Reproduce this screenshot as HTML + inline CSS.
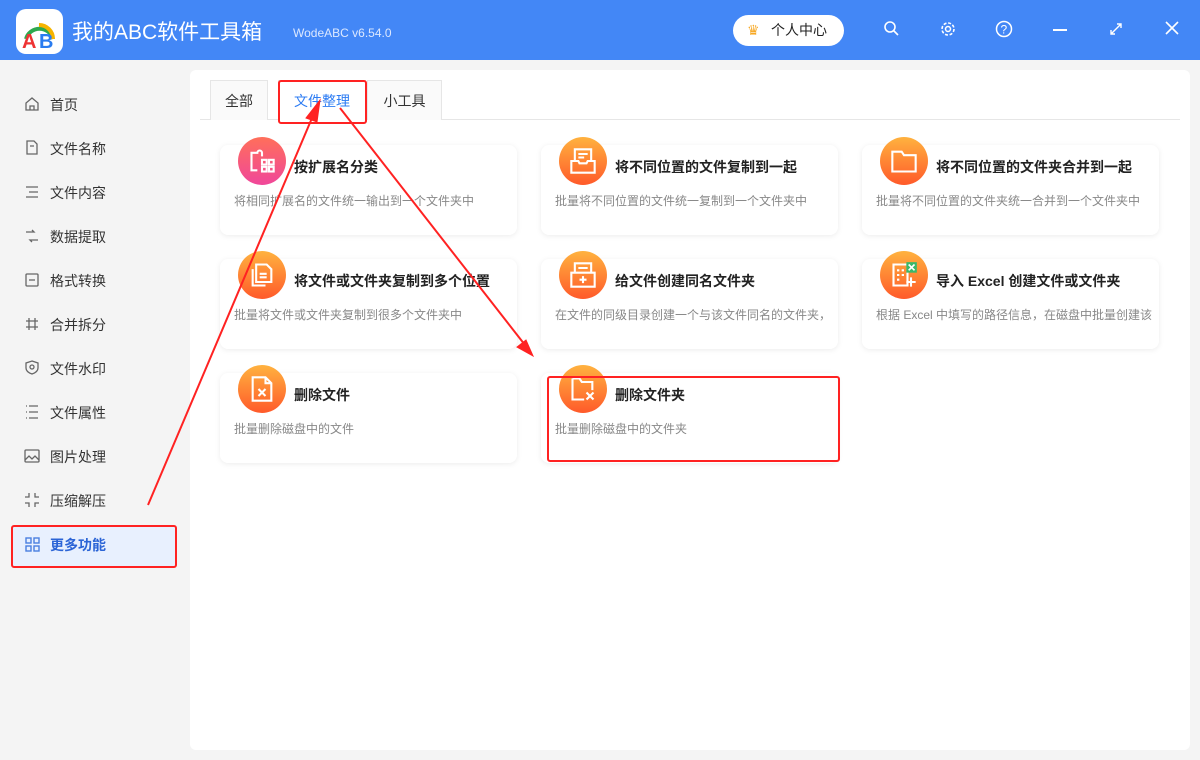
<!DOCTYPE html>
<html><head><meta charset="utf-8"><style>
*{margin:0;padding:0;box-sizing:border-box}
body{width:1200px;height:760px;overflow:hidden;background:#f4f4f4;font-family:"Liberation Sans","Noto Sans CJK SC",sans-serif;position:relative}
.top{position:absolute;left:0;top:0;width:1200px;height:60px;background:#4387f6}
.logo{position:absolute;left:16px;top:9px;width:47px;height:45px;background:#fff;border-radius:10px}
.ttl{position:absolute;left:72px;top:16px;color:#fff;font-size:21px}
.ver{position:absolute;left:293px;top:26px;color:#dce8ff;font-size:12px}
.pc{position:absolute;left:733px;top:15px;width:111px;height:31px;background:#fff;border-radius:16px;font-size:14px;color:#222;line-height:31px;padding-left:38px}
.ic{position:absolute;top:20px}
.side div{position:absolute;left:50px;font-size:14px;color:#333}
.panel{position:absolute;left:190px;top:70px;width:1000px;height:680px;background:#fff;border-radius:6px}
.tab{position:absolute;top:80px;height:40px;border:1px solid #e6e6e6;border-bottom:none;background:#fafafa;font-size:14px;line-height:40px;text-align:center;color:#333}
.card{position:absolute;width:297px;height:90px;background:#fff;border-radius:8px;box-shadow:0 1px 6px rgba(0,0,0,.08)}
.card .c{position:absolute;left:18px;top:-8px;width:48px;height:48px;border-radius:50%;background:linear-gradient(#ffb23f,#ff5a2a)}
.card .c svg{position:absolute;left:10px;top:10px;width:28px;height:28px}
.card b{position:absolute;left:74px;top:12px;font-size:14px;color:#222}
.card p{position:absolute;left:14px;top:47px;font-size:12px;color:#888;white-space:nowrap;width:280px;overflow:hidden}
.rb{position:absolute;border:2px solid #f22;border-radius:3px}
</style></head><body>
<div class="top"></div>
<div class="logo"><svg width="47" height="45"><path d="M10 30 A14 14 0 0 1 37 30" stroke="#2ea84f" stroke-width="4" fill="none"/><path d="M23 16 A14 14 0 0 1 37 30" stroke="#f6b400" stroke-width="4" fill="none"/><text x="6" y="39" font-size="20" font-weight="bold" fill="#e33">A</text><text x="23" y="39" font-size="20" font-weight="bold" fill="#2a7cf0">B</text></svg></div>
<div class="ttl">我的ABC软件工具箱</div><div class="ver">WodeABC v6.54.0</div>
<div class="pc"><span style="position:absolute;left:14px;top:0;color:#f7a823">♛</span>个人中心</div>
<svg class="ic" style="left:883px" width="18" height="18"><circle cx="7" cy="7" r="5" stroke="#fff" stroke-width="1.6" fill="none"/><path d="M11 11l4 4" stroke="#fff" stroke-width="1.6"/></svg>
<svg class="ic" style="left:939px" width="18" height="18"><circle cx="9" cy="9" r="6" stroke="#fff" stroke-width="1.6" fill="none" stroke-dasharray="3 1.7"/><circle cx="9" cy="9" r="2.5" stroke="#fff" stroke-width="1.5" fill="none"/></svg>
<svg class="ic" style="left:995px" width="18" height="18"><circle cx="9" cy="9" r="7.5" stroke="#fff" stroke-width="1.5" fill="none"/><text x="5.5" y="13.5" fill="#fff" font-size="12">?</text></svg>
<div style="position:absolute;left:1053px;top:29px;width:14px;height:2px;background:#fff"></div>
<svg class="ic" style="left:1108px" width="16" height="18"><path d="M3 14l10-10M9 4h4v4M3 10v4h4" stroke="#fff" stroke-width="1.4" fill="none"/></svg>
<svg class="ic" style="left:1164px" width="16" height="18"><path d="M2 2l12 12M14 2L2 14" stroke="#fff" stroke-width="1.6"/></svg>
<div class="side">
<div style="top:95px">首页</div><div style="top:139px">文件名称</div><div style="top:183px">文件内容</div><div style="top:227px">数据提取</div><div style="top:271px">格式转换</div><div style="top:315px">合并拆分</div><div style="top:359px">文件水印</div><div style="top:403px">文件属性</div><div style="top:447px">图片处理</div><div style="top:491px">压缩解压</div>
</div>
<svg style="position:absolute;left:0;top:0" width="50" height="520"><g fill="none" stroke="#666" stroke-width="1.3">
<path d="M26 110V103l6-5 6 5v7zM30 110v-4h4v4"/>
<path d="M27 141h7l3 3v10h-10zM30 146h4"/>
<path d="M26 187h12M29 192h9M26 197h12"/>
<path d="M26 232h8l-2-2M38 240h-8l2 2"/>
<rect x="26" y="274" width="12" height="12" rx="1"/><path d="M29 280h6"/>
<path d="M29 318v12M35 318v12M26 321h12M26 327h12"/>
<path d="M32 361l6 2v5c0 3-3 5-6 6-3-1-6-3-6-6v-5z"/><circle cx="32" cy="367" r="2"/>
<path d="M29 406h9M29 412h9M29 418h9M26 406h1M26 412h1M26 418h1"/>
<rect x="25" y="450" width="14" height="12" rx="1"/><path d="M25 460l4-4 3 3 3-3 4 4"/>
<path d="M29 493v4h-4M35 493v4h4M29 507v-4h-4M35 507v-4h4"/>
</g></svg>
<div style="position:absolute;left:12px;top:526px;width:164px;height:40px;background:#e8f0fe"></div>
<svg style="position:absolute;left:25px;top:537px" width="16" height="16"><g fill="none" stroke="#4a7fe0" stroke-width="1.4"><rect x="1" y="1" width="5" height="5"/><rect x="9" y="1" width="5" height="5"/><rect x="1" y="9" width="5" height="5"/><rect x="9" y="9" width="5" height="5"/></g></svg>
<div style="position:absolute;left:50px;top:535px;font-size:14px;color:#2b64d6;font-weight:bold">更多功能</div>
<div class="panel"></div>
<div style="position:absolute;left:200px;top:119px;width:980px;height:1px;background:#e6e6e6"></div>
<div class="tab" style="left:210px;width:58px">全部</div>
<div class="tab" style="left:278px;width:88px;background:#fff;color:#2d7cf3;height:41px">文件整理</div>
<div class="tab" style="left:367px;width:75px">小工具</div>
<div class="card" style="left:220px;top:145px"><div class="c" style="background:linear-gradient(#ff6f5a,#f0479a)"><svg viewBox="0 0 24 24" fill="none" stroke="#fff" stroke-width="1.8"><path d="M3 12V5h5a2 2 0 0 1 4 0h0v3M3 12v8h5"/><rect x="12" y="11" width="4" height="4"/><rect x="18" y="11" width="4" height="4"/><rect x="12" y="17" width="4" height="4"/><rect x="18" y="17" width="4" height="4"/></svg></div><b>按扩展名分类</b><p>将相同扩展名的文件统一输出到一个文件夹中</p></div>
<div class="card" style="left:541px;top:145px"><div class="c"><svg viewBox="0 0 24 24" fill="none" stroke="#fff" stroke-width="1.8"><path d="M5 12V2h14v10M2 12h6l1 2h6l1-2h6v10H2zM8 6h8M8 9h5"/></svg></div><b>将不同位置的文件复制到一起</b><p>批量将不同位置的文件统一复制到一个文件夹中</p></div>
<div class="card" style="left:862px;top:145px"><div class="c"><svg viewBox="0 0 24 24" fill="none" stroke="#fff" stroke-width="1.8"><path d="M2 4h8l2 3h10v14H2z"/></svg></div><b>将不同位置的文件夹合并到一起</b><p>批量将不同位置的文件夹统一合并到一个文件夹中</p></div>
<div class="card" style="left:220px;top:259px"><div class="c"><svg viewBox="0 0 24 24" fill="none" stroke="#fff" stroke-width="1.8"><path d="M7 3h9l4 4v11H7zM4 7v14h11M10 11h6M10 14h6"/></svg></div><b>将文件或文件夹复制到多个位置</b><p>批量将文件或文件夹复制到很多个文件夹中</p></div>
<div class="card" style="left:541px;top:259px"><div class="c"><svg viewBox="0 0 24 24" fill="none" stroke="#fff" stroke-width="1.8"><path d="M5 10V2h14v8M2 10h20v12H2zM8 6h8M12 13v6M9 16h6"/></svg></div><b>给文件创建同名文件夹</b><p>在文件的同级目录创建一个与该文件同名的文件夹，</p></div>
<div class="card" style="left:862px;top:259px"><div class="c"><svg viewBox="0 0 24 24" fill="none" stroke="#fff" stroke-width="1.8"><path d="M3 3h12v18H3zM6 8h2M6 12h2M6 16h2M10 8h2M10 12h2"/><rect x="14" y="1" width="9" height="9" fill="#3ab86a" stroke="none"/><path d="M16 3l5 5M21 3l-5 5" stroke-width="1.4"/><path d="M18 14v8M14 18h8"/></svg></div><b>导入 Excel 创建文件或文件夹</b><p>根据 Excel 中填写的路径信息，在磁盘中批量创建该</p></div>
<div class="card" style="left:220px;top:373px"><div class="c"><svg viewBox="0 0 24 24" fill="none" stroke="#fff" stroke-width="1.8"><path d="M4 2h11l5 5v15H4zM15 2v5h5M9 12l6 6M15 12l-6 6"/></svg></div><b>删除文件</b><p>批量删除磁盘中的文件</p></div>
<div class="card" style="left:541px;top:373px"><div class="c"><svg viewBox="0 0 24 24" fill="none" stroke="#fff" stroke-width="1.8"><path d="M3 3v18h10M3 3h6l2 3h9v7M15 15l6 6M21 15l-6 6"/></svg></div><b>删除文件夹</b><p>批量删除磁盘中的文件夹</p></div>
<div class="rb" style="left:278px;top:80px;width:89px;height:44px"></div>
<div class="rb" style="left:547px;top:376px;width:293px;height:86px"></div>
<div class="rb" style="left:11px;top:525px;width:166px;height:43px"></div>
<svg style="position:absolute;left:0;top:0" width="1200" height="760"><g stroke="#f22" fill="#f22">
<path d="M148 505L312 118" stroke-width="2"/><path d="M320 100l-14 18 11 4z"/>
<path d="M340 108L525 345" stroke-width="2"/><path d="M533 356l-16-9 9-7z"/></g></svg>
</body></html>
